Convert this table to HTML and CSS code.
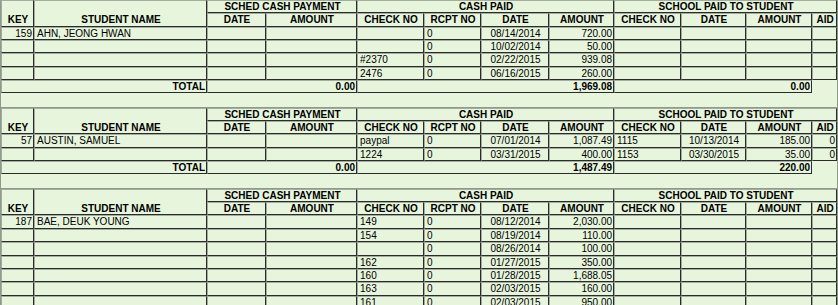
FILE: index.html
```html
<!DOCTYPE html>
<html>
<head>
<meta charset="utf-8">
<link rel="stylesheet" href="styles.css">
</head>
<body>
<div class="sheet">
<table class="block">
<colgroup><col class="c-key"><col class="c-name"><col class="c-sd"><col class="c-sa"><col class="c-ck"><col class="c-rc"><col class="c-cd"><col class="c-ca"><col class="c-sck"><col class="c-sdt"><col class="c-sam"><col class="c-aid"></colgroup>
<tr class="h1"><td class="h" rowspan="2">KEY</td><td class="h" rowspan="2">STUDENT NAME</td><td class="h" colspan="2">SCHED CASH PAYMENT</td><td class="h" colspan="4">CASH PAID</td><td class="h" colspan="4">SCHOOL PAID TO STUDENT</td></tr>
<tr><td class="h">DATE</td><td class="h">AMOUNT</td><td class="h">CHECK NO</td><td class="h">RCPT NO</td><td class="h">DATE</td><td class="h">AMOUNT</td><td class="h">CHECK NO</td><td class="h">DATE</td><td class="h">AMOUNT</td><td class="h">AID</td></tr>
<tr><td class="r">159</td><td>AHN, JEONG HWAN</td><td></td><td></td><td></td><td>0</td><td class="c">08/14/2014</td><td class="r">720.00</td><td></td><td></td><td></td><td></td></tr>
<tr><td></td><td></td><td></td><td></td><td></td><td>0</td><td class="c">10/02/2014</td><td class="r">50.00</td><td></td><td></td><td></td><td></td></tr>
<tr><td></td><td></td><td></td><td></td><td>#2370</td><td>0</td><td class="c">02/22/2015</td><td class="r">939.08</td><td></td><td></td><td></td><td></td></tr>
<tr><td></td><td></td><td></td><td></td><td>2476</td><td>0</td><td class="c">06/16/2015</td><td class="r">260.00</td><td></td><td></td><td></td><td></td></tr>
<tr class="tot"><td class="r" colspan="2">TOTAL</td><td class="r" colspan="2">0.00</td><td class="r" colspan="4">1,969.08</td><td class="r" colspan="3">0.00</td><td class="nob"></td></tr>
<tr class="gap"><td colspan="12"></td></tr>
</table>
<table class="block">
<colgroup><col class="c-key"><col class="c-name"><col class="c-sd"><col class="c-sa"><col class="c-ck"><col class="c-rc"><col class="c-cd"><col class="c-ca"><col class="c-sck"><col class="c-sdt"><col class="c-sam"><col class="c-aid"></colgroup>
<tr class="h1"><td class="h" rowspan="2">KEY</td><td class="h" rowspan="2">STUDENT NAME</td><td class="h" colspan="2">SCHED CASH PAYMENT</td><td class="h" colspan="4">CASH PAID</td><td class="h" colspan="4">SCHOOL PAID TO STUDENT</td></tr>
<tr><td class="h">DATE</td><td class="h">AMOUNT</td><td class="h">CHECK NO</td><td class="h">RCPT NO</td><td class="h">DATE</td><td class="h">AMOUNT</td><td class="h">CHECK NO</td><td class="h">DATE</td><td class="h">AMOUNT</td><td class="h">AID</td></tr>
<tr><td class="r">57</td><td>AUSTIN, SAMUEL</td><td></td><td></td><td>paypal</td><td>0</td><td class="c">07/01/2014</td><td class="r">1,087.49</td><td>1115</td><td class="c">10/13/2014</td><td class="r">185.00</td><td class="r">0</td></tr>
<tr><td></td><td></td><td></td><td></td><td>1224</td><td>0</td><td class="c">03/31/2015</td><td class="r">400.00</td><td>1153</td><td class="c">03/30/2015</td><td class="r">35.00</td><td class="r">0</td></tr>
<tr class="tot"><td class="r" colspan="2">TOTAL</td><td class="r" colspan="2">0.00</td><td class="r" colspan="4">1,487.49</td><td class="r" colspan="3">220.00</td><td class="nob"></td></tr>
<tr class="gap"><td colspan="12"></td></tr>
</table>
<table class="block">
<colgroup><col class="c-key"><col class="c-name"><col class="c-sd"><col class="c-sa"><col class="c-ck"><col class="c-rc"><col class="c-cd"><col class="c-ca"><col class="c-sck"><col class="c-sdt"><col class="c-sam"><col class="c-aid"></colgroup>
<tr class="h1"><td class="h" rowspan="2">KEY</td><td class="h" rowspan="2">STUDENT NAME</td><td class="h" colspan="2">SCHED CASH PAYMENT</td><td class="h" colspan="4">CASH PAID</td><td class="h" colspan="4">SCHOOL PAID TO STUDENT</td></tr>
<tr><td class="h">DATE</td><td class="h">AMOUNT</td><td class="h">CHECK NO</td><td class="h">RCPT NO</td><td class="h">DATE</td><td class="h">AMOUNT</td><td class="h">CHECK NO</td><td class="h">DATE</td><td class="h">AMOUNT</td><td class="h">AID</td></tr>
<tr><td class="r">187</td><td>BAE, DEUK YOUNG</td><td></td><td></td><td>149</td><td>0</td><td class="c">08/12/2014</td><td class="r">2,030.00</td><td></td><td></td><td></td><td></td></tr>
<tr><td></td><td></td><td></td><td></td><td>154</td><td>0</td><td class="c">08/19/2014</td><td class="r">110.00</td><td></td><td></td><td></td><td></td></tr>
<tr><td></td><td></td><td></td><td></td><td></td><td>0</td><td class="c">08/26/2014</td><td class="r">100.00</td><td></td><td></td><td></td><td></td></tr>
<tr><td></td><td></td><td></td><td></td><td>162</td><td>0</td><td class="c">01/27/2015</td><td class="r">350.00</td><td></td><td></td><td></td><td></td></tr>
<tr><td></td><td></td><td></td><td></td><td>160</td><td>0</td><td class="c">01/28/2015</td><td class="r">1,688.05</td><td></td><td></td><td></td><td></td></tr>
<tr><td></td><td></td><td></td><td></td><td>163</td><td>0</td><td class="c">02/03/2015</td><td class="r">160.00</td><td></td><td></td><td></td><td></td></tr>
<tr><td></td><td></td><td></td><td></td><td>161</td><td>0</td><td class="c">02/03/2015</td><td class="r">950.00</td><td></td><td></td><td></td><td></td></tr>
</table>
</div>
</body>
</html>
```
FILE: styles.css
```css
html, body {
  margin: 0;
  padding: 0;
  background: #e6f5dc;
}
.sheet {
  width: 838px;
  overflow: hidden;
}
.block {
  width: 838px;
  table-layout: fixed;
  border-collapse: separate;
  border-spacing: 0;
  border: 1px solid #909a8c;
  border-bottom: 0;
  background: #e6f5dc;
}
.block:first-child {
  border-top: 0;
}
.c-key { width: 33px; }
.c-name { width: 173px; }
.c-sd { width: 59px; }
.c-sa { width: 91px; }
.c-ck { width: 67px; }
.c-rc { width: 57px; }
.c-cd { width: 68px; }
.c-ca { width: 65px; }
.c-sck { width: 67px; }
.c-sdt { width: 65px; }
.c-sam { width: 66px; }
.c-aid { width: 25px; }
td {
  border-style: solid;
  border-width: 1px;
  border-color: #a3ad9e #2b2b2b #2b2b2b #a3ad9e;
  padding: 0 1px 0 2px;
  font-family: "Liberation Sans", Arial, sans-serif;
  font-size: 10px;
  line-height: 11.34px;
  color: #000;
  white-space: nowrap;
  overflow: hidden;
  text-align: left;
  vertical-align: middle;
}
td.h {
  font-weight: bold;
  text-align: center;
  vertical-align: bottom;
}
td.r {
  text-align: right;
  padding: 0 1px 0 1px;
}
td.c {
  text-align: center;
}
.tot td {
  font-weight: bold;
}
td.nob {
  border-color: transparent;
}
.gap td {
  border: 0;
  height: 13.33px;
  padding: 0;
  line-height: 13.33px;
}
```
